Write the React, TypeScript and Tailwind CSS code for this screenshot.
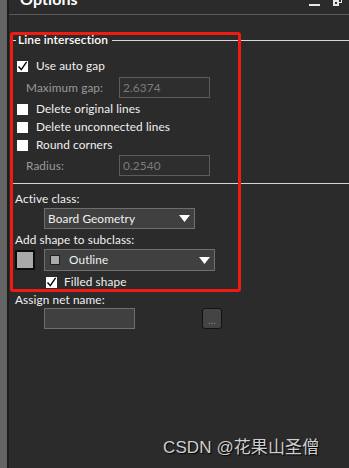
import React from "react";

const font = { fontFamily: 'Lato, "Noto Sans", sans-serif' };

function Check({ checked }: { checked?: boolean }) {
  return (
    <div className="w-[11px] h-[11px] bg-white shrink-0 relative">
      {checked && (
        <svg viewBox="0 0 11 11" className="absolute inset-0 w-[11px] h-[11px]">
          <path d="M1.5 5.5 L4.3 8.6 L9.6 0.8" fill="none" stroke="#000" strokeWidth="1.4" />
        </svg>
      )}
    </div>
  );
}

function Tri() {
  return (
    <svg viewBox="0 0 11 7" className="w-[11px] h-[7px]">
      <path d="M0 0 H11 L5.5 7 Z" fill="#fff" />
    </svg>
  );
}

export default function App() {
  return (
    <div
      className="w-[349px] h-[468px] bg-[#2b2b2b] flex relative overflow-hidden text-[11.8px] tracking-[0.1px] text-[#f0f0f0]"
      style={font}
    >
      <div className="w-[7px] bg-[#646464] shrink-0" />
      <div className="w-[2px] bg-[#1c1c1c] shrink-0" />
      <div className="flex-1 flex flex-col">
        {/* title bar */}
        <div className="h-[15px] border-b border-[#5a5a5a] overflow-hidden flex items-start relative">
          <div className="ml-[11px] mt-[-9px] text-[16px] font-bold leading-[16px] text-white">Options</div>
          <div className="absolute left-[300px] top-[4px] w-[11px] h-[2px] bg-[#e6e6e6]" />
          <div className="absolute left-[324px] top-[-3px] w-[9px] h-[9px]">
            <div className="absolute left-[2px] top-0 w-[7px] h-[6px] border border-[#e6e6e6]" />
            <div className="absolute left-0 top-[3px] w-[6px] h-[6px] border-2 border-[#e6e6e6] bg-[#2b2b2b]" />
          </div>
        </div>

        {/* group header */}
        <div className="mt-[18px] h-[14px] flex items-center">
          <div className="ml-[3px] w-[4px] h-[1px] bg-[#d8d8d8]" />
          <div className="ml-[2px] font-semibold text-white leading-[14px] text-[12px]">Line intersection</div>
          <div className="ml-[4px] flex-1 h-[1px] bg-[#d8d8d8]" />
        </div>

        <div className="mt-[10px] h-[18px] flex items-center">
          <div className="ml-[8px]"><Check checked /></div>
          <div className="ml-[8px]">Use auto gap</div>
        </div>

        <div className="mt-[2px] h-[21px] flex items-center">
          <div className="ml-[17px] w-[93px] text-[#9a9a9a]">Maximum gap:</div>
          <div className="w-[91px] h-[21px] border border-[#5c5c5c] bg-[#2e2e2e] flex items-center px-[3px] text-[#7c7c7c]">2.6374</div>
        </div>

        <div className="mt-[2px] h-[18px] flex items-center">
          <div className="ml-[8px]"><Check /></div>
          <div className="ml-[8px]">Delete original lines</div>
        </div>
        <div className="h-[18px] flex items-center">
          <div className="ml-[8px]"><Check /></div>
          <div className="ml-[8px]">Delete unconnected lines</div>
        </div>
        <div className="h-[18px] flex items-center">
          <div className="ml-[8px]"><Check /></div>
          <div className="ml-[8px]">Round corners</div>
        </div>

        <div className="mt-[1px] h-[21px] flex items-center">
          <div className="ml-[17px] w-[93px] text-[#9a9a9a]">Radius:</div>
          <div className="w-[91px] h-[21px] border border-[#5c5c5c] bg-[#2e2e2e] flex items-center px-[3px] text-[#7c7c7c]">0.2540</div>
        </div>

        <div className="mt-[7px] ml-[1px] h-[1px] bg-[#d4d4d4]" />

        <div className="mt-[7px] h-[16px] flex items-center ml-[6px]">Active class:</div>

        <div className="mt-[1px] h-[21px] flex">
          <div className="ml-[35px] w-[151px] h-[21px] border border-[#6e6e6e] bg-[#404040] flex items-center pl-[3px] pr-[4px] justify-between">
            <span>Board Geometry</span>
            <Tri />
          </div>
        </div>

        <div className="mt-[3px] h-[16px] flex items-center ml-[6px]">Add shape to subclass:</div>

        <div className="mt-[1px] h-[22px] flex items-center">
          <div className="ml-[6px] w-[20px] h-[20px] border-2 border-[#0c0c0c] bg-[#a9a9a9]" />
          <div className="ml-[9px] w-[171px] h-[22px] border border-[#6e6e6e] bg-[#404040] flex items-center pl-[5px] pr-[4px]">
            <div className="w-[10px] h-[10px] border border-[#202020] bg-[#a9a9a9]" />
            <span className="ml-[9px] flex-1">Outline</span>
            <Tri />
          </div>
        </div>

        <div className="mt-[4px] h-[14px] flex items-center">
          <div className="ml-[37px]"><Check checked /></div>
          <div className="ml-[7px]">Filled shape</div>
        </div>

        <div className="mt-[3px] h-[16px] flex items-center ml-[6px]">Assign net name:</div>

        <div className="h-[21px] flex items-center">
          <div className="ml-[35px] w-[91px] h-[21px] border border-[#6e6e6e] bg-[#404040]" />
          <div className="ml-[67px] w-[20px] h-[21px] border border-[#111] rounded-[3px] bg-[#444] flex items-center justify-center text-[#8a8a8a] text-[10px] leading-none pt-[2px]">...</div>
        </div>
      </div>

      {/* annotation box */}
      <div className="absolute left-[10px] top-[32px] w-[231px] h-[260px] border-[3px] border-[#f01c14] rounded-[3px] pointer-events-none" />

      {/* watermark */}
      <div
        className="absolute left-[163px] top-[437px] text-[17px] leading-[22px] text-[#cfcfcf]"
        style={{ fontFamily: '"Liberation Sans", "Noto Sans CJK SC", sans-serif', textShadow: "1px 1px 1px #000" }}
      >
        CSDN @花果山圣僧
      </div>
    </div>
  );
}
